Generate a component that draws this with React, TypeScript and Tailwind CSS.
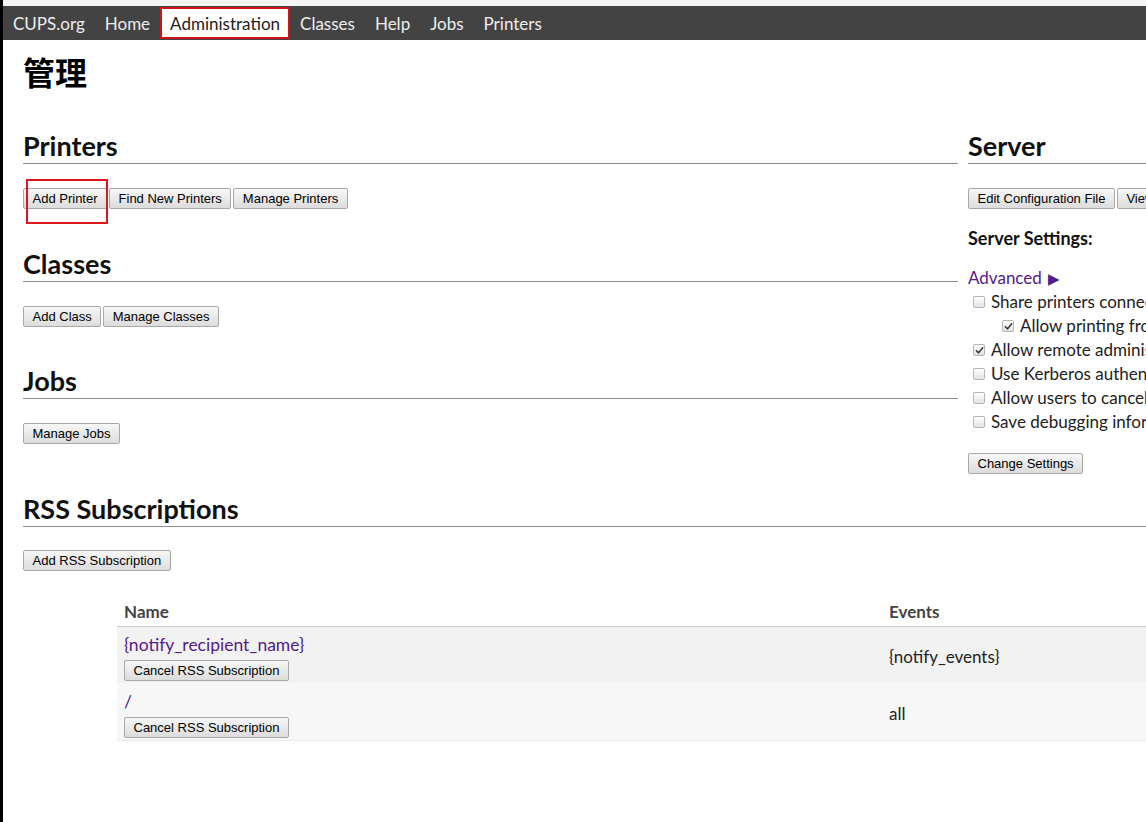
import React from "react";

const sans = "font-['Lato','Noto_Sans',sans-serif]";

function Btn({ children }: { children: React.ReactNode }) {
  return (
    <button
      type="button"
      className="block h-[21px] shrink-0 whitespace-nowrap rounded-[2px] border border-[#a8a8a8] bg-linear-to-b from-[#f7f7f7] to-[#dcdcdc] px-[8.5px] font-['Liberation_Sans',Arial,sans-serif] text-[13px] leading-[15px] text-black"
    >
      {children}
    </button>
  );
}

function H2({ children, className = "" }: { children: React.ReactNode; className?: string }) {
  return (
    <h2
      className={`border-b border-[#8c8c8c] pb-[1px] text-[27px] font-bold leading-[32px] text-[#111] ${className}`}
    >
      {children}
    </h2>
  );
}

function Check({ checked }: { checked?: boolean }) {
  return (
    <span className="relative inline-flex h-[12px] w-[12px] shrink-0 items-center justify-center rounded-[2px] border border-[#b4b4b4] bg-linear-to-b from-[#ffffff] to-[#e2e2e2]">
      {checked && (
        <svg width="9" height="9" viewBox="0 0 10 10" className="block">
          <path d="M1.5 5.2 L4 7.6 L8.6 2" fill="none" stroke="#3a3a3a" strokeWidth="1.7" strokeLinecap="round" strokeLinejoin="round" />
        </svg>
      )}
    </span>
  );
}

function CheckRow({ label, checked, indent }: { label: string; checked?: boolean; indent?: boolean }) {
  return (
    <div className={`flex h-[24px] items-center whitespace-nowrap ${indent ? "pl-[34px]" : "pl-[5px]"}`}>
      <Check checked={checked} />
      <span className="ml-[6px] text-[17px] leading-[24px] text-[#222]">{label}</span>
    </div>
  );
}

export default function App() {
  const navItems = ["CUPS.org", "Home", "Administration", "Classes", "Help", "Jobs", "Printers"];
  return (
    <div className={`h-[822px] w-[1146px] overflow-hidden border-l-[3px] border-black bg-white ${sans}`}>
      <div className="h-[6px] bg-[#f5f5f5]" />
      <nav className="flex h-[34px] items-stretch bg-[#434343]">
        {navItems.map((n) =>
          n === "Administration" ? (
            <div
              key={n}
              className="mt-[1px] mb-[1px] flex items-center border-2 border-[#d0121b] bg-white px-[8px] pt-[2px] text-[17px] text-[#222]"
            >
              {n}
            </div>
          ) : (
            <div key={n} className="flex items-center px-[10px] pt-[2px] text-[17px] text-[#eeeeee]">
              {n}
            </div>
          )
        )}
      </nav>

      <div className="pl-[20px]">
        <h1 className="mt-[11px] font-['Noto_Sans_CJK_SC','Noto_Sans_CJK_JP',sans-serif] text-[32px] font-bold leading-[40px] text-black">
          管理
        </h1>

        <div className="mt-[39px] flex items-start gap-[10px]">
          <div className="w-[935px] shrink-0">
            <H2>Printers</H2>
            <div className="mt-[24px] flex gap-[2px]">
              <div className="relative flex">
                <Btn>Add Printer</Btn>
                <div className="pointer-events-none absolute left-[3px] top-[-9px] h-[45px] w-[82px] border-2 border-[#e0141d]" />
              </div>
              <Btn>Find New Printers</Btn>
              <Btn>Manage Printers</Btn>
            </div>

            <H2 className="mt-[39px]">Classes</H2>
            <div className="mt-[24px] flex gap-[2px]">
              <Btn>Add Class</Btn>
              <Btn>Manage Classes</Btn>
            </div>

            <H2 className="mt-[38px]">Jobs</H2>
            <div className="mt-[24px] flex gap-[2px]">
              <Btn>Manage Jobs</Btn>
            </div>
          </div>

          <div className="w-[935px] shrink-0">
            <H2>Server</H2>
            <div className="mt-[24px] flex gap-[2px]">
              <Btn>Edit Configuration File</Btn>
              <Btn>View Access Log</Btn>
              <Btn>View Error Log</Btn>
              <Btn>View Page Log</Btn>
            </div>
            <div className="mt-[17px] text-[18px] font-bold leading-[24px] text-[#111]">Server Settings:</div>
            <div className="mt-[16px] flex items-center text-[17px] leading-[24px] text-[#551a8b]">
              Advanced <span className="ml-[6px] text-[15px] leading-[24px]">▶</span>
            </div>
            <CheckRow label="Share printers connected to this system" />
            <CheckRow label="Allow printing from the Internet" checked indent />
            <CheckRow label="Allow remote administration" checked />
            <CheckRow label="Use Kerberos authentication (FAQ)" />
            <CheckRow label="Allow users to cancel any job (not just their own)" />
            <CheckRow label="Save debugging information for troubleshooting" />
            <div className="mt-[19px] flex">
              <Btn>Change Settings</Btn>
            </div>
          </div>
        </div>

        <H2 className="mt-[19px] w-[1200px]">RSS Subscriptions</H2>
        <div className="mt-[23px] flex">
          <Btn>Add RSS Subscription</Btn>
        </div>

        <table className="mt-[26px] ml-[94px] w-[1100px] border-collapse text-left">
          <thead>
            <tr>
              <th className="w-[765px] border-b border-[#cccccc] px-[7px] pt-[3px] pb-[2px] text-[17px] font-bold leading-[24px] text-[#444]">
                Name
              </th>
              <th className="border-b border-[#cccccc] px-[7px] pt-[3px] pb-[2px] text-[17px] font-bold leading-[24px] text-[#444]">
                Events
              </th>
            </tr>
          </thead>
          <tbody>
            <tr className="border-b border-[#f9f9f9] bg-[#f2f2f2]">
              <td className="px-[7px] pt-[6px] pb-[2px] align-top">
                <div className="text-[17.5px] leading-[24px] text-[#551a8b]">{"{notify_recipient_name}"}</div>
                <div className="mt-[3px] flex">
                  <Btn>Cancel RSS Subscription</Btn>
                </div>
              </td>
              <td className="px-[7px] pt-[4px] align-middle text-[17px] leading-[24px] text-[#222]">{"{notify_events}"}</td>
            </tr>
            <tr className="border-b border-[#ececec] bg-[#f7f7f7]">
              <td className="px-[7px] pt-[6px] pb-[2px] align-top">
                <div className="text-[17.5px] leading-[24px] text-[#551a8b]">/</div>
                <div className="mt-[3px] flex">
                  <Btn>Cancel RSS Subscription</Btn>
                </div>
              </td>
              <td className="px-[7px] pt-[4px] align-middle text-[17px] leading-[24px] text-[#222]">all</td>
            </tr>
          </tbody>
        </table>
      </div>
    </div>
  );
}
